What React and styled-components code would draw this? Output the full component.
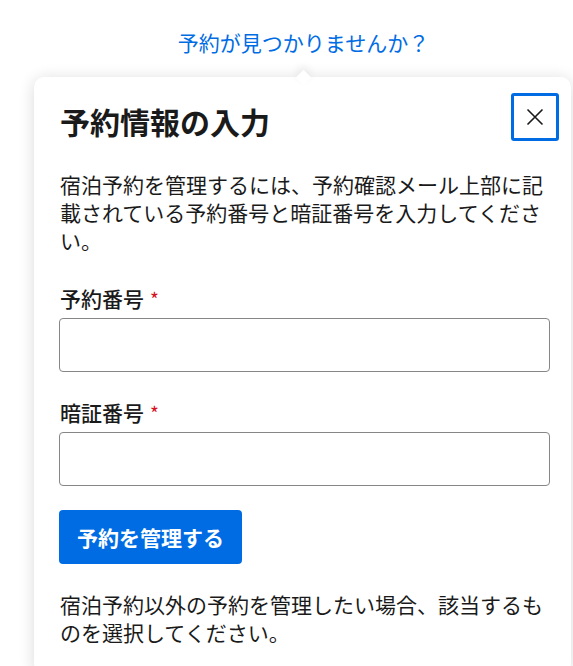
import React from 'react';
import styled, { createGlobalStyle } from 'styled-components';

const GlobalStyle = createGlobalStyle`
  html, body {
    margin: 0;
    padding: 0;
    background: #ffffff;
  }
  body {
    font-family: "Noto Sans CJK JP", "Noto Sans", sans-serif;
    color: #1a1a1a;
  }
`;

const Wrapper = styled.div`
  display: flex;
  flex-direction: column;
  align-items: center;
  padding: 0 2px 0 34px;
`;

const HelpLink = styled.a`
  display: block;
  margin-top: 28px;
  margin-left: 2px;
  font-size: 21px;
  line-height: 28px;
  color: #006ce4;
  text-decoration: none;
  cursor: pointer;
`;

const Popover = styled.div`
  position: relative;
  align-self: stretch;
  margin-top: 21px;
  background: #ffffff;
  border-radius: 10px;
  box-shadow: 0 2px 16px rgba(26, 26, 26, 0.16);
  padding: 16px 12px 28px 25px;
`;

const Arrow = styled.span`
  position: absolute;
  top: -5px;
  left: 50%;
  width: 11px;
  height: 11px;
  margin-left: -5px;
  background: #ffffff;
  transform: rotate(45deg);
  box-shadow: -3px -3px 8px rgba(26, 26, 26, 0.08);
`;

const Header = styled.div`
  display: flex;
  align-items: flex-start;
  justify-content: space-between;
  padding-left: 1px;
`;

const Title = styled.h2`
  margin: 10px 0 0;
  font-size: 30px;
  line-height: 36px;
  font-weight: 700;
`;

const CloseButton = styled.button`
  display: flex;
  align-items: center;
  justify-content: center;
  flex-shrink: 0;
  width: 48px;
  height: 48px;
  padding: 0;
  background: #ffffff;
  border: 3px solid #006ce4;
  border-radius: 3px;
  color: #1a1a1a;
  cursor: pointer;
`;

const Body = styled.div`
  padding-right: 9px;
`;

const Text = styled.p`
  margin: ${(p) => p.$top || 0}px 0 0;
  padding-left: 1px;
  font-size: 21px;
  line-height: 28px;
  color: #1a1a1a;
`;

const Field = styled.div`
  margin-top: ${(p) => p.$top}px;
`;

const Label = styled.label`
  display: block;
  padding-left: 1px;
  font-size: 21px;
  line-height: 27px;
  font-weight: 500;
  color: #1a1a1a;
`;

const Required = styled.span`
  color: #d4111e;
  margin-left: 6px;
  font-size: 19px;
  font-weight: 400;
`;

const Input = styled.input`
  display: block;
  box-sizing: border-box;
  width: 100%;
  height: 54px;
  margin-top: 6px;
  padding: 0 12px;
  border: 1px solid #868686;
  border-radius: 4px;
  font-family: inherit;
  font-size: 21px;
  outline: none;
`;

const SubmitButton = styled.button`
  display: block;
  margin-top: 24px;
  height: 54px;
  padding: 0 18px;
  background: #006ce4;
  border: none;
  border-radius: 4px;
  color: #ffffff;
  font-family: inherit;
  font-size: 21px;
  font-weight: 700;
  cursor: pointer;
`;

function CloseIcon() {
  return (
    <svg width="18" height="18" viewBox="0 0 18 18" fill="none">
      <path d="M1.5 1.5 L16.5 16.5 M16.5 1.5 L1.5 16.5" stroke="currentColor" strokeWidth="1.6" />
    </svg>
  );
}

export default function App() {
  return (
    <>
      <GlobalStyle />
      <Wrapper>
        <HelpLink>予約が見つかりませんか？</HelpLink>
        <Popover>
          <Arrow />
          <Header>
            <Title>予約情報の入力</Title>
            <CloseButton aria-label="閉じる">
              <CloseIcon />
            </CloseButton>
          </Header>
          <Body>
            <Text $top={29}>
              宿泊予約を管理するには、予約確認メール上部に記載されている予約番号と暗証番号を入力してください。
            </Text>
            <Field $top={31}>
              <Label>
                予約番号<Required>*</Required>
              </Label>
              <Input type="text" />
            </Field>
            <Field $top={27}>
              <Label>
                暗証番号<Required>*</Required>
              </Label>
              <Input type="text" />
            </Field>
            <SubmitButton>予約を管理する</SubmitButton>
            <Text $top={26}>
              宿泊予約以外の予約を管理したい場合、該当するものを選択してください。
            </Text>
          </Body>
        </Popover>
      </Wrapper>
    </>
  );
}
